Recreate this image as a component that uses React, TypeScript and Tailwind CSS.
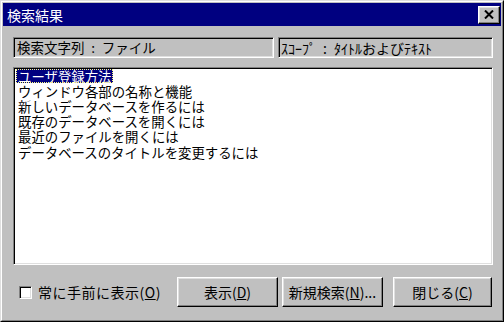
const items = [
  "ユーザ登録方法",
  "ウィンドウ各部の名称と機能",
  "新しいデータベースを作るには",
  "既存のデータベースを開くには",
  "最近のファイルを開くには",
  "データベースのタイトルを変更するには",
];

const raised =
  "border border-t-white border-l-white border-r-black border-b-black shadow-[inset_-1px_-1px_0_#808080,inset_1px_1px_0_#dfdfdf]";
const sunken =
  "border border-t-[#808080] border-l-[#808080] border-r-white border-b-white shadow-[inset_1px_1px_0_#000,inset_-1px_-1px_0_#dfdfdf]";

const Btn = ({ label, k, rest, w }: { label: string; k: string; rest?: string; w: string }) => (
  <button className={`${raised} ${w} h-[30px] bg-[#c0c0c0] text-[14px] text-black flex items-center justify-center`}>
    {label}(<span className="underline">{k}</span>){rest}
  </button>
);

export default function App() {
  return (
    <div
      className="w-[504px] h-[322px] bg-[#c0c0c0] border border-t-[#dfdfdf] border-l-[#dfdfdf] border-r-black border-b-black text-black"
      style={{ fontFamily: '"Noto Sans CJK JP", sans-serif' }}
    >
      <div className="h-full border border-t-white border-l-white border-r-[#808080] border-b-[#808080] p-px flex flex-col">
        {/* title bar */}
        <div className="h-[23px] bg-[#000080] flex items-center justify-between pl-[4px] pr-[1px]">
          <span className="text-white text-[14px] leading-none">検索結果</span>
          <div className={`${raised} w-[22px] h-[18px] bg-[#c0c0c0] flex items-center justify-center`}>
            <svg width="10" height="9" viewBox="0 0 10 9">
              <path d="M1 0.5 L9 8.5 M9 0.5 L1 8.5" stroke="#000" strokeWidth="2" />
            </svg>
          </div>
        </div>

        <div className="flex-1 flex flex-col pl-[10px] pr-[8px] pt-[11px]">
          <div className="flex gap-[4px]">
            <div className={`${sunken} w-[261px] h-[21px] flex items-center pl-[3px] text-[13.5px] leading-none`}>
              検索文字列{"\u2002:\u2002"}ファイル
            </div>
            <div className={`${sunken} w-[215px] h-[21px] flex items-center pl-[2px] text-[14px] leading-none`}>
              ｽｺｰﾌﾟ{"\u2002:\u2002"}ﾀｲﾄﾙおよびﾃｷｽﾄ
            </div>
          </div>

          <div className={`${sunken} mt-[9px] h-[198px] bg-white pl-[2px] text-[13.4px]`}>
            {items.map((t, i) => (
              <div key={t} className="h-[15.2px] flex items-center">
                {i === 0 ? (
                  <span className="inline-block bg-[#000080] text-white h-[14px] leading-[14px] px-[2px] outline-1 outline-dotted outline-[#ffff80] -outline-offset-1">
                    {t}
                  </span>
                ) : (
                  <span className="inline-block h-[14px] leading-[14px] px-[2px]">{t}</span>
                )}
              </div>
            ))}
          </div>

          <div className="flex items-center mt-[12px]">
            <div className="flex items-center w-[164px] pl-[6px]">
              <div className={`${sunken} w-[13px] h-[13px] bg-white`} />
              <span className="ml-[6px] text-[14px] leading-none tracking-[0.5px]">
                常に手前に表示(<span className="underline">O</span>)
              </span>
            </div>
            <Btn label="表示" k="D" w="w-[101px]" />
            <div className="w-[4px]" />
            <Btn label="新規検索" k="N" rest="..." w="w-[101px]" />
            <div className="w-[10px]" />
            <Btn label="閉じる" k="C" w="w-[99px]" />
          </div>
        </div>
      </div>
    </div>
  );
}
